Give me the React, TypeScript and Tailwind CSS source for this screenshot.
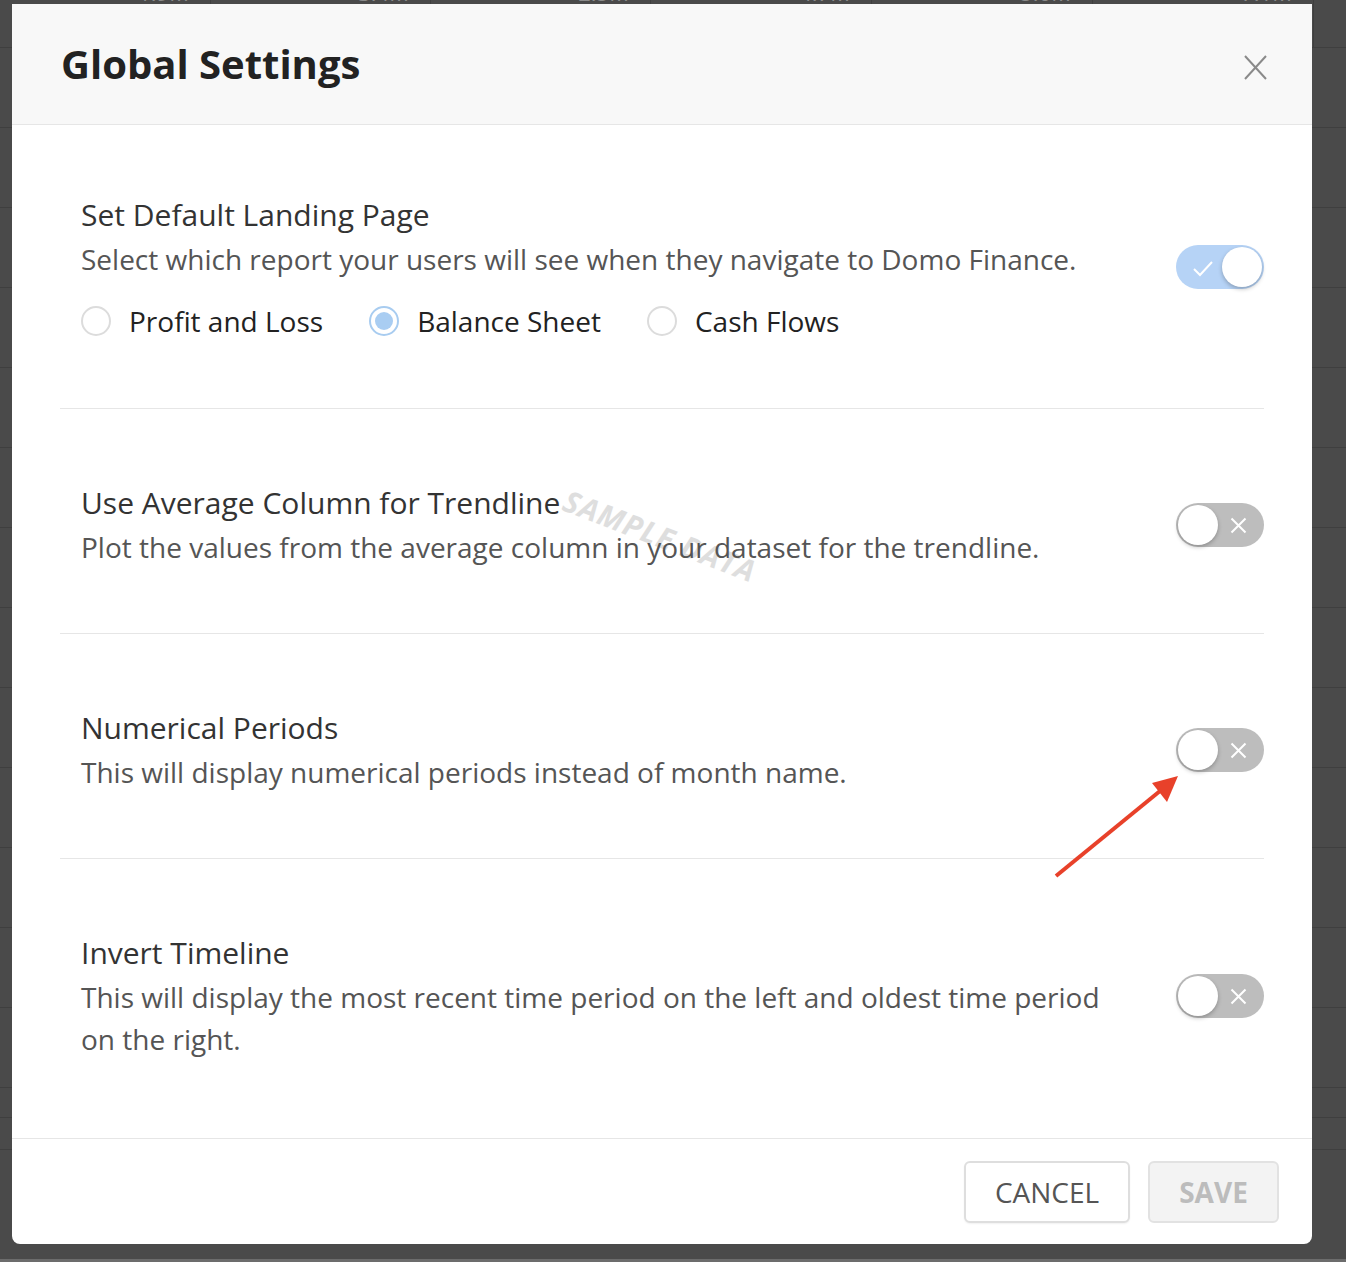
import React from 'react';

const font = { fontFamily: '"Open Sans", "Liberation Sans", sans-serif' };

const cols = [
  { w: 'w-[211px]', v: '1.9M' },
  { w: 'w-[220px]', v: '3.4M' },
  { w: 'w-[220px]', v: '2.5M' },
  { w: 'w-[221px]', v: '4.7M' },
  { w: 'w-[221px]', v: '5.0M' },
  { w: 'w-[221px]', v: '7.1M' },
];

function Backdrop() {
  return (
    <div className="flex flex-col h-full">
      <div className="flex h-[48px] border-b border-[#3f3f3f] shrink-0">
        {cols.map((c, i) => (
          <div key={i} className={`${c.w} border-r border-[#3f3f3f] flex justify-end pr-[21px]`}>
            <span className="text-[22px] leading-[26px] -mt-[21px] text-[#8a8a8a]">{c.v}</span>
          </div>
        ))}
      </div>
      {Array.from({ length: 13 }).map((_, i) => (
        <div key={i} className="h-[80px] border-b border-[#3f3f3f] shrink-0" />
      ))}
      <div className="h-[30px] border-b border-[#3f3f3f] shrink-0" />
      <div className="h-[32px] border-b border-[#3f3f3f] shrink-0" />
      <div className="flex-1" />
      <div className="h-[3px] bg-[#6c6c6c] shrink-0" />
    </div>
  );
}

function Toggle({ on }: { on: boolean }) {
  return (
    <div
      className={`relative w-[88px] h-[44px] rounded-full shrink-0 ${on ? 'bg-[#b6d3f6]' : 'bg-[#bdbdbd]'}`}
    >
      {on ? (
        <svg className="absolute left-[16px] top-[14px]" width="22" height="18" viewBox="0 0 22 18">
          <path d="M2 10 L8 16 L20 3" fill="none" stroke="#fff" strokeWidth="2" />
        </svg>
      ) : (
        <svg className="absolute left-[54px] top-[14px]" width="17" height="17" viewBox="0 0 17 17">
          <path d="M1.5 1.5 L15.5 15.5 M15.5 1.5 L1.5 15.5" fill="none" stroke="#fff" strokeWidth="2" />
        </svg>
      )}
      <div
        className={`absolute top-[2px] w-[40px] h-[40px] rounded-full bg-white shadow-[0_2px_4px_rgba(0,0,0,0.25)] ${
          on ? 'left-[46px]' : 'left-[2px]'
        }`}
      />
    </div>
  );
}

function Radio({ label, checked }: { label: string; checked?: boolean }) {
  return (
    <div className="flex items-center gap-[18px] h-[40px]">
      <div
        className={`w-[30px] h-[30px] rounded-full border-2 flex items-center justify-center ${
          checked ? 'border-[#a8ccf0]' : 'border-[#dcdcdc]'
        }`}
      >
        {checked && <div className="w-[18px] h-[18px] rounded-full bg-[#a9cdf2]" />}
      </div>
      <span className="text-[28px] text-[#222]">{label}</span>
    </div>
  );
}

function Section({
  title,
  desc,
  on,
  first,
  last,
  children,
  mark,
}: {
  title: string;
  desc: string;
  on: boolean;
  first?: boolean;
  last?: boolean;
  children?: React.ReactNode;
  mark?: boolean;
}) {
  return (
    <div
      className={`relative flex items-center pl-[21px] ${first ? 'pt-[68px] pb-[67px]' : 'pt-[72px] pb-[65px]'} ${
        last ? '' : 'border-b border-[#e6e6e6]'
      }`}
    >
      {mark && (
        <div className="absolute left-[498px] top-[104px] rotate-[21deg] text-[30px] font-bold italic text-[#dedede] tracking-[1px] pointer-events-none select-none">
          SAMPLE DATA
        </div>
      )}
      <div className="relative flex-1 mr-[50px]">
        <div className="text-[30px] leading-[44px] text-[#333]">{title}</div>
        <div className="text-[28px] leading-[42px] text-[#555] mt-[1px]">{desc}</div>
        {children}
      </div>
      <Toggle on={on} />
    </div>
  );
}

export default function App() {
  return (
    <div style={font} className="relative w-[1346px] h-[1262px] bg-[#4a4a4a] overflow-hidden">
      <Backdrop />

      <div className="absolute left-[12px] top-[4px] w-[1300px] h-[1240px] bg-white rounded-b-[8px] flex flex-col">
        <div className="h-[121px] shrink-0 bg-[#f8f8f8] border-b border-[#e6e6e6] flex items-center justify-between pl-[49px] pr-[45px]">
          <h1 className="text-[40px] font-bold text-[#222]">Global Settings</h1>
          <svg width="23" height="25" viewBox="0 0 23 25" className="mt-[6px]">
            <path d="M1 1 L22 24 M22 1 L1 24" fill="none" stroke="#8a8a8a" strokeWidth="2" />
          </svg>
        </div>

        <div className="flex-1 px-[48px]">
          <Section
            first
            title="Set Default Landing Page"
            desc="Select which report your users will see when they navigate to Domo Finance."
            on
          >
            <div className="flex items-center gap-[46px] mt-[21px]">
              <Radio label="Profit and Loss" />
              <Radio label="Balance Sheet" checked />
              <Radio label="Cash Flows" />
            </div>
          </Section>
          <Section
            mark
            title="Use Average Column for Trendline"
            desc="Plot the values from the average column in your dataset for the trendline."
            on={false}
          />
          <Section
            title="Numerical Periods"
            desc="This will display numerical periods instead of month name."
            on={false}
          />
          <Section
            last
            title="Invert Timeline"
            desc="This will display the most recent time period on the left and oldest time period on the right."
            on={false}
          />
        </div>

        <div className="h-[106px] shrink-0 border-t border-[#e6e6e6] flex items-center justify-end gap-[18px] pr-[33px]">
          <button className="w-[166px] h-[62px] rounded-[6px] border-2 border-[#dedede] bg-white text-[28px] text-[#555] shadow-[0_1px_2px_rgba(0,0,0,0.06)]">
            CANCEL
          </button>
          <button className="w-[131px] h-[62px] rounded-[6px] border-2 border-[#e2e2e2] bg-[#f3f3f3] text-[28px] font-bold text-[#bcbcbc]">
            SAVE
          </button>
        </div>
      </div>

      <svg className="absolute left-0 top-0 pointer-events-none" width="1346" height="1262">
        <line x1="1056" y1="876" x2="1160" y2="791" stroke="#e8412a" strokeWidth="4" />
        <polygon points="1178,776 1152,783 1167,802" fill="#e8412a" />
      </svg>
    </div>
  );
}
